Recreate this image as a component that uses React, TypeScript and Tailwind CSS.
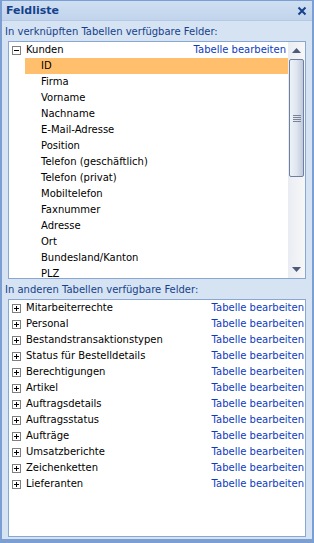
import React from 'react';

const kundenFields = [
  'ID',
  'Firma',
  'Vorname',
  'Nachname',
  'E-Mail-Adresse',
  'Position',
  'Telefon (geschäftlich)',
  'Telefon (privat)',
  'Mobiltelefon',
  'Faxnummer',
  'Adresse',
  'Ort',
  'Bundesland/Kanton',
  'PLZ',
];

const otherTables = [
  'Mitarbeiterrechte',
  'Personal',
  'Bestandstransaktionstypen',
  'Status für Bestelldetails',
  'Berechtigungen',
  'Artikel',
  'Auftragsdetails',
  'Auftragsstatus',
  'Aufträge',
  'Umsatzberichte',
  'Zeichenketten',
  'Lieferanten',
];

const ExpandBox: React.FC<{ open?: boolean }> = ({ open }) => (
  <svg width="9" height="9" viewBox="0 0 9 9" className="shrink-0">
    <rect x="0.5" y="0.5" width="8" height="8" fill="#fff" stroke="#7f7f7f" />
    <line x1="2" y1="4.5" x2="7" y2="4.5" stroke="#000" />
    {!open && <line x1="4.5" y1="2" x2="4.5" y2="7" stroke="#000" />}
  </svg>
);

const Scrollbar: React.FC = () => (
  <div className="w-[17px] flex flex-col bg-gradient-to-r from-[#e9edf3] to-[#f7f7f7]">
    <div className="h-[17px] flex items-center justify-center">
      <svg width="9" height="5" viewBox="0 0 9 5">
        <polygon points="0,5 9,5 4.5,0" fill="#4d5b79" />
      </svg>
    </div>
    <div className="mx-px h-[118px] rounded-[2px] border border-[#6f7f9f] bg-gradient-to-r from-[#eef2f8] via-[#dfe6f0] to-[#c0cadb] flex flex-col items-center justify-center gap-px">
      <div className="w-[8px] h-px bg-[#7a8494]" />
      <div className="w-[8px] h-px bg-[#7a8494]" />
      <div className="w-[8px] h-px bg-[#7a8494]" />
      <div className="w-[8px] h-px bg-[#7a8494]" />
    </div>
    <div className="flex-1" />
    <div className="h-[17px] flex items-center justify-center">
      <svg width="9" height="5" viewBox="0 0 9 5">
        <polygon points="0,0 9,0 4.5,5" fill="#4d5b79" />
      </svg>
    </div>
  </div>
);

const App: React.FC = () => {
  return (
    <div
      className="w-[314px] h-[543px] flex flex-col bg-[#d5e3f3] border-x-2 border-t border-b-4 border-[#7b9fd3] overflow-hidden text-[10px] leading-[16px]"
      style={{ fontFamily: '"DejaVu Sans", Verdana, sans-serif' }}
    >
      {/* Title bar */}
      <div className="h-[20px] flex items-center justify-between pl-[4px] pr-[5px] bg-gradient-to-b from-[#cfdff2] to-[#c1d4ec] border-b border-[#b4c9e6]">
        <span className="text-[11px] font-bold text-[#15428b]">Feldliste</span>
        <svg width="10" height="10" viewBox="0 0 10 10">
          <path d="M1.5 1.5 L8.5 8.5 M8.5 1.5 L1.5 8.5" stroke="#15428b" strokeWidth="2" />
        </svg>
      </div>

      {/* Linked tables */}
      <div className="h-[20px] flex items-center pl-[3px] pt-px text-[#15428b]">
        In verknüpften Tabellen verfügbare Felder:
      </div>
      <div className="mx-[6px] h-[238px] border border-[#8aa7d4] bg-white flex overflow-hidden">
        <div className="flex-1 pl-[3px] text-black">
          <div className="h-[16px] flex items-center">
            <ExpandBox open />
            <span className="ml-[5px] flex-1">Kunden</span>
            <span className="text-[#0c3cbc] pr-[2px]">Tabelle bearbeiten</span>
          </div>
          {kundenFields.map((f, i) => (
            <div
              key={f}
              className={`h-[16px] ml-[13px] pl-[16px] flex items-center ${i === 0 ? 'bg-[#ffbf6c]' : ''}`}
            >
              {f}
            </div>
          ))}
        </div>
        <Scrollbar />
      </div>

      {/* Other tables */}
      <div className="h-[20px] flex items-center pl-[3px] pt-[2px] text-[#15428b]">
        In anderen Tabellen verfügbare Felder:
      </div>
      <div className="mx-[6px] h-[238px] border border-[#8aa7d4] bg-white pl-[3px] pr-[1px] text-black">
        {otherTables.map((t) => (
          <div key={t} className="h-[16px] flex items-center">
            <ExpandBox />
            <span className="ml-[5px] flex-1">{t}</span>
            <span className="text-[#0c3cbc]">Tabelle bearbeiten</span>
          </div>
        ))}
      </div>
      <div className="flex-1" />
    </div>
  );
};

export default App;
